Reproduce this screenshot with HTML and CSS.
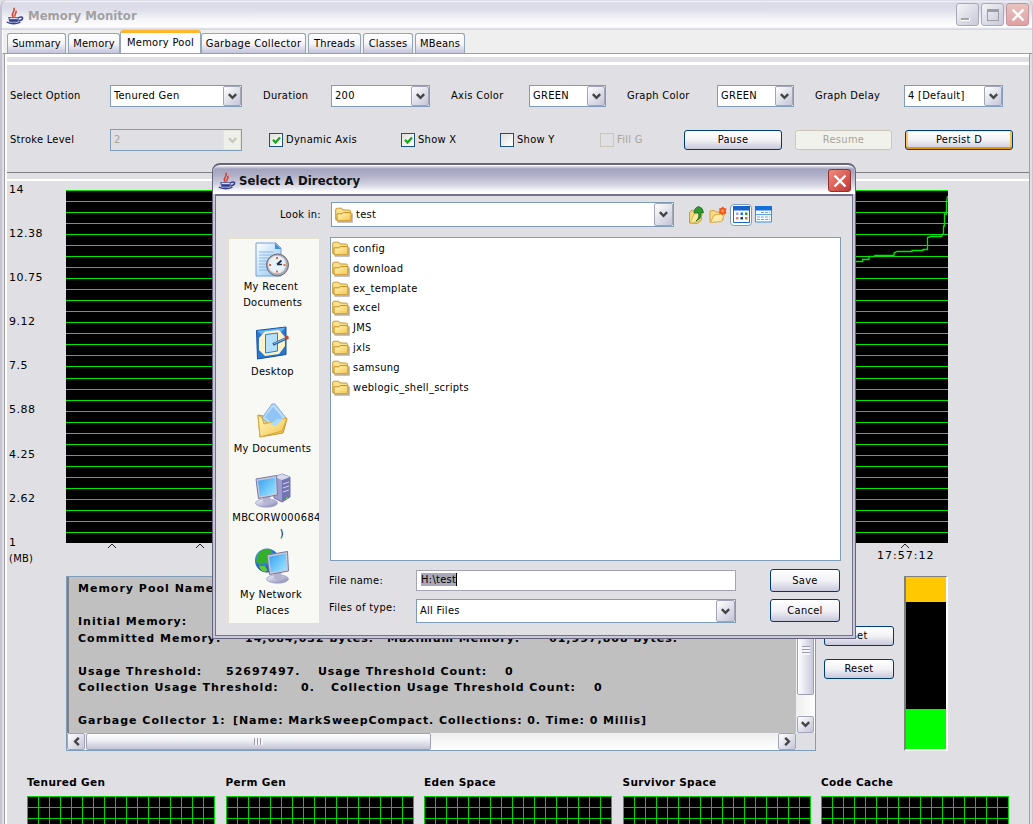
FILE: index.html
```
<!DOCTYPE html>
<html lang="en">
<head>
<meta charset="utf-8">
<title>Memory Monitor</title>
<link rel="stylesheet" href="styles.css">
</head>
<body>
<svg class="defs" aria-hidden="true">
  <defs>
    <linearGradient id="gFold" x1="0" y1="0" x2="1" y2="1"><stop offset="0" stop-color="#fff8b8"/><stop offset="1" stop-color="#f4c450"/></linearGradient>
    <linearGradient id="gScr" x1="0" y1="0" x2="1" y2="1"><stop offset="0" stop-color="#38a0f0"/><stop offset="1" stop-color="#a0e8ff"/></linearGradient>
    <linearGradient id="gPage" x1="0" y1="0" x2="1" y2="1"><stop offset="0" stop-color="#fff"/><stop offset="1" stop-color="#8cc4f4"/></linearGradient>
    <linearGradient id="gMetal" x1="0" y1="0" x2="1" y2="1"><stop offset="0" stop-color="#f4f4fc"/><stop offset="1" stop-color="#8484b4"/></linearGradient>
    <radialGradient id="gGlobe" cx=".35" cy=".3" r=".8"><stop offset="0" stop-color="#58b8ff"/><stop offset="1" stop-color="#0838a0"/></radialGradient>
  </defs>
  <symbol id="java" viewBox="0 0 17 17">
    <path d="M7 9.4C3.5 6.5 9 5 7.600 .8M8.600 9.200C7 7 11 5.400 9.200 3.600" fill="none" stroke="#d8402c" stroke-width="1.500"/>
    <path d="M2 9.500h10.500l-1 4.500q-4.500 1.600-8.500 0z" fill="#5560a8"/>
    <path d="M3.500 10.800h7.500" stroke="#dfe2f4"/>
    <path d="M12 9.800q4.500-1 3.500 1.400-.6 1.500-3.700 1.800M.8 14.300q6.500 3 12.800 0" fill="none" stroke="#34408c" stroke-width="1.400"/>
    <path d="M3.500 12.700h7.500" stroke="#28347c" stroke-width=".8"/>
  </symbol>
  <symbol id="folder" viewBox="0 0 18 16">
    <path d="M2.500 15h14.500V6.500" fill="none" stroke="#8c8c8c" stroke-width="1.500" opacity=".7"/>
    <path d="M.7 12.500V3q0-1.800 1.600-1.800h4q1 0 1.500 1.700l6.500.2q1.200 0 1.200 1.300v8z" fill="#f8e08c" stroke="#c89830"/>
    <path d="M2 13.800V6.800h4.900l1.400-1.200h7.700v7.400q0 .8-.8.800z" fill="url(#gFold)" stroke="#c48c20"/>
  </symbol>
  <symbol id="chev" viewBox="0 0 9 7"><path d="M.8 1.200l3.700 3.700 3.700-3.700" fill="none" stroke="currentColor" stroke-width="2.400"/></symbol>
  <symbol id="tick" viewBox="0 0 9 9"><path d="M1 3.800l2.500 2.700L8 1.500" fill="none" stroke="#21a121" stroke-width="2.200"/></symbol>
  <symbol id="monitor" viewBox="0 0 24 33">
    <ellipse cx="11.500" cy="28.500" rx="11" ry="4.200" fill="url(#gMetal)" stroke="#9898b8" stroke-width=".7"/>
    <path d="M8 22l7-1 1 7q-4 2-8 0z" fill="#b4b4d0"/>
    <path d="M1 4.500L21.500 1l1 19.500L3.500 24z" fill="#c8c8dc" stroke="#7878a0"/>
    <path d="M3 6.300L19.800 3.200l.8 15.700L5 21.700z" fill="url(#gScr)"/>
  </symbol>
</svg>

<div class="window">
  <header class="titlebar">
    <svg class="ico-java"><use href="#java"/></svg>
    <span class="title">Memory Monitor</span>
    <div class="caption">
      <span class="cap"><i class="glyph-min"></i></span>
      <span class="cap"><i class="glyph-max"></i></span>
      <span class="cap cap-close faded"><svg viewBox="0 0 14 14"><path d="M1.500 1.500l11 11M12.500 1.500l-11 11"/></svg></span>
    </div>
  </header>

  <nav class="tabs">
    <span class="tab t1">Summary</span><span class="tab t2">Memory</span><span class="tab active">Memory Pool</span><span class="tab t4">Garbage Collector</span><span class="tab t5">Threads</span><span class="tab t6">Classes</span><span class="tab t7">MBeans</span>
  </nav>

  <main class="page">
    <section class="controls">
      <div class="row row-a">
        <label>Select Option</label>
        <div class="combo w132"><span>Tenured Gen</span><b><svg><use href="#chev"/></svg></b></div>
        <label>Duration</label>
        <div class="combo w99"><span>200</span><b><svg><use href="#chev"/></svg></b></div>
        <label>Axis Color</label>
        <div class="combo w77"><span>GREEN</span><b><svg><use href="#chev"/></svg></b></div>
        <label>Graph Color</label>
        <div class="combo w77"><span>GREEN</span><b><svg><use href="#chev"/></svg></b></div>
        <label>Graph Delay</label>
        <div class="combo w99"><span>4 [Default]</span><b><svg><use href="#chev"/></svg></b></div>
      </div>
      <div class="row row-b">
        <label>Stroke Level</label>
        <div class="combo w132 off"><span>2</span><b><svg><use href="#chev"/></svg></b></div>
        <div class="check"><i><svg><use href="#tick"/></svg></i>Dynamic Axis</div>
        <div class="check"><i><svg><use href="#tick"/></svg></i>Show X</div>
        <div class="check"><i></i>Show Y</div>
        <div class="check off"><i></i>Fill G</div>
        <div class="btn pause">Pause</div>
        <div class="btn resume">Resume</div>
        <div class="btn persist">Persist D</div>
      </div>
    </section>

    <section class="graph">
      <div class="scale"><span>14</span><span>12.38</span><span>10.75</span><span>9.12</span><span>7.5</span><span>5.88</span><span>4.25</span><span>2.62</span><span class="last">1<em>(MB)</em></span></div>
      <div class="plot-col">
        <div class="plot">
          <svg viewBox="0 0 882 353"><path d="M780 71.500H796.500V69.500H803V66.500H808L809 65.500H828V63L831 61.500H846V60.500H857V59.500H861.500V47.500L865 46.500H875.500L877.500 43V36H878.500V24H880.500V12L881.500 6" fill="none" stroke="#00e600" stroke-width="1.300"/></svg>
        </div>
        <div class="ticks">
          <svg viewBox="0 0 882 6"><path d="M42 5l4-4 4 4M130 5l4-4 4 4M835 5l4-4 4 4" fill="none" stroke="#222"/></svg>
          <span>17:57:12</span>
        </div>
      </div>
    </section>

    <section class="detail">
      <div class="pane">
        <div class="text">
          <p>Memory Pool Name:</p>
          <p>&nbsp;</p>
          <p>Initial Memory:</p>
          <p><span class="c167">Committed Memory:</span><span class="c142">14,684,032 bytes.</span><span class="c162">Maximum Memory:</span><span>61,997,808 bytes.</span></p>
          <p>&nbsp;</p>
          <p><span class="c148">Usage Threshold:</span><span class="c92">52697497.</span><span class="c187">Usage Threshold Count:</span><span>0</span></p>
          <p><span class="c223">Collection Usage Threshold:</span><span class="c30">0.</span><span class="c263">Collection Usage Threshold Count:</span><span>0</span></p>
          <p>&nbsp;</p>
          <p><span class="c155">Garbage Collector 1:</span><span class="gc">[Name: MarkSweepCompact. Collections: 0. Time: 0 Millis]</span></p>
        </div>
        <div class="vbar"><div class="vthumb"><i></i></div><b class="sbtn"><svg><use href="#chev"/></svg></b></div>
        <div class="hbar"><b class="sbtn left"><svg><use href="#chev"/></svg></b><div class="hthumb"><i></i></div><b class="sbtn right"><svg><use href="#chev"/></svg></b></div>
      </div>
      <div class="set-col"><div class="btn">Set</div><div class="btn">Reset</div></div>
      <div class="gauge"><i class="g-top"></i><i class="g-mid"></i><i class="g-low"></i></div>
    </section>

    <section class="pools">
      <figure><figcaption>Tenured Gen</figcaption><div class="grid"></div></figure>
      <figure><figcaption>Perm Gen</figcaption><div class="grid"></div></figure>
      <figure><figcaption>Eden Space</figcaption><div class="grid"></div></figure>
      <figure><figcaption>Survivor Space</figcaption><div class="grid"></div></figure>
      <figure><figcaption>Code Cache</figcaption><div class="grid"></div></figure>
    </section>
  </main>
</div>

<div class="dialog">
  <header class="dlg-title">
    <svg class="ico-java"><use href="#java"/></svg>
    <span class="title">Select A Directory</span>
    <span class="cap cap-close"><svg viewBox="0 0 14 14"><path d="M1.500 1.500l11 11M12.500 1.500l-11 11"/></svg></span>
  </header>
  <div class="dlg-body">
    <div class="look">
      <label>Look in:</label>
      <div class="combo"><svg class="ico-folder"><use href="#folder"/></svg><span>test</span><b><svg><use href="#chev"/></svg></b></div>
      <div class="tools">
        <svg width="17" height="20" viewBox="0 0 17 20"><path d="M1.500 18V7l3-2 2 1.500h4l3 1V15l-4 3.500z" fill="#f3d878" stroke="#c8a040"/><path d="M2 18.500l4-9.500 9-1-3.500 8z" fill="#fae9a0" stroke="#d0a848" stroke-width=".8"/><path d="M8 16q4-3 2.500-8.500l-4.500.5Q6 3 10.500 1.500q4.500 1 5 6l-2.500.2q1 5.500-5 8.300z" fill="#2c9a30" stroke="#146818" stroke-width=".8"/></svg>
        <svg width="18" height="20" viewBox="0 0 18 20"><path d="M1 17V6l4-.7L7 7h7v8z" fill="#f6dc84" stroke="#d0a040"/><path d="M1.500 17.500L5 10l11-1.500-3.500 8z" fill="#fbeaa8" stroke="#d8ac4c"/><path d="M13.800 1.500l1.300 1.600 2.400.4-.7 2.500.5 2.500-2.500.5-1.200 1.500-1.600-1.500-2.200-.7.700-2.300-.5-2.500 2.300-.5z" fill="#f4541c"/><circle cx="13.700" cy="6" r="1.600" fill="#ffa050"/></svg>
        <span class="picked"><svg width="17" height="17" viewBox="0 0 17 17"><path d="M.5.5h16v16H.5z" fill="#fff" stroke="#1868c8"/><path d="M0 0h17v4.500H0z" fill="#1464cc"/><path d="M3 6.500h2.500V9H3z" fill="#a8a0d0"/><path d="M7.500 6.500H10V9H7.500z" fill="#1c78d8"/><path d="M12 6.500h2.500V9H12z" fill="#20a030"/><path d="M3 11h2.500v2.500H3z" fill="#f08068"/><path d="M7.500 11H10v2.500H7.500z" fill="#103c80"/><path d="M12 11h2.500v2.500H12z" fill="#b08030"/></svg></span>
        <svg width="17" height="17" viewBox="0 0 17 17"><path d="M.5.500h16v15.500H.5z" fill="#f4fbff" stroke="#4090dc"/><path d="M0 0h17v4.500H0z" fill="#1470d8"/><path d="M1 8.500h15" stroke="#58a4e8"/><path d="M2 11h13M2 13.500h13M6 6.500h9" stroke="#98a4b4" stroke-dasharray="3 1"/></svg>
      </div>
    </div>
    <div class="mid">
      <aside class="places">
        <div class="place p1">
          <svg width="34" height="36" viewBox="0 0 34 36"><path d="M1 1h20l5 5v28H1z" fill="url(#gPage)" stroke="#74a0d8"/><path d="M20 1v6h6z" fill="#3c90e0"/><path d="M4 10h15M4 13h13M4 16h12M4 19h10M4 22h9M4 25h9M4 28h10" stroke="#88b4e8"/><circle cx="22.500" cy="23" r="11" fill="#a8aab4" stroke="#686c78"/><circle cx="22" cy="22.500" r="8.300" fill="#e6f4ff" stroke="#e8e8f0" stroke-width="1.500"/><path d="M22 22.500l4.500-4M22 22.500h5" stroke="#222c3c" stroke-width="1.700"/><path d="M21 15h2v2h-2zM21 28.500h2v2h-2zM14 22h2v2h-2zM28.500 22h2v2h-2z" fill="#f06830"/></svg>
          <span>My Recent<br>&nbsp;Documents</span>
        </div>
        <div class="place p2">
          <svg width="34" height="34" viewBox="0 0 34 34"><path d="M1.500 4.500L31 1v27.500L2.500 33z" fill="#2878d0" stroke="#1450a0"/><path d="M2 5l28.500-3.500L17 16z" fill="#60b0f4"/><path d="M10 5.500l14-1.500 6 7v9l-6 8-14 2-6-6V12z" fill="#fdf2c8"/><path d="M10.500 8.500l12-1.500v18l-12 2z" fill="#b4e0fc" stroke="#2c80d4"/><path d="M18 18.500l14-6.500" stroke="#30609c" stroke-width="3"/><path d="M19 17.700l11-5.100" stroke="#84c4ec"/><path d="M30 10.500l3-1 1 3-3 1.500z" fill="#d04428"/></svg>
          <span>Desktop</span>
        </div>
        <div class="place p3">
          <svg width="32" height="36" viewBox="0 0 32 36"><path d="M2 12l5 1h19l5 3-4 14L4 34z" fill="#f5c850" stroke="#c89428"/><path d="M16 1h3l11 14-11 11L6 15z" fill="#b8dcfa" stroke="#78acdc"/><path d="M9 14l8-10 9 10-7 9z" fill="#90c4f4"/><path d="M2 12l4 3 2 6 8-2 15-4-5 13L4 34z" fill="url(#gFold)" stroke="#d8a840"/><path d="M14 21l7-5 6 0-7 7z" fill="#a8dcf8"/></svg>
          <span>My Documents</span>
        </div>
        <div class="place p4">
          <svg width="36" height="35" viewBox="0 0 36 35"><path d="M19 4l8-3 8 3v20l-8 5-8-4z" fill="#9c9ccc" stroke="#7474a8"/><path d="M27 7l8-3v20l-8 5z" fill="#7474b0"/><path d="M19 4l8-3 8 3-8 3z" fill="#d8d8ec"/><path d="M28 11l6-2M28 15l6-2M28 19l6-2" stroke="#d0d0ec"/><path d="M31 24h2v2h-2z" fill="#50d030"/><use href="#monitor" width="24" height="34" x="0" y="1"/></svg>
          <span>MBCORW000684<br>&nbsp; &nbsp;)</span>
        </div>
        <div class="place p5">
          <svg width="36" height="37" viewBox="0 0 36 37"><circle cx="13" cy="12.500" r="12" fill="url(#gGlobe)"/><path d="M5 4q6-4 11-3l2 4-5 3 3 4-2 4-4-2-4 3-4-4z" fill="#34b028"/><path d="M5 18l6 0 3 5-4 1q-4-2-5-6z" fill="#60c83c"/><use href="#monitor" width="24" height="34" x="12" y="2"/></svg>
          <span>My Network<br>&nbsp;Places</span>
        </div>
      </aside>
      <ul class="files">
        <li><svg class="ico-folder"><use href="#folder"/></svg>config</li>
        <li><svg class="ico-folder"><use href="#folder"/></svg>download</li>
        <li><svg class="ico-folder"><use href="#folder"/></svg>ex_template</li>
        <li><svg class="ico-folder"><use href="#folder"/></svg>excel</li>
        <li><svg class="ico-folder"><use href="#folder"/></svg>JMS</li>
        <li><svg class="ico-folder"><use href="#folder"/></svg>jxls</li>
        <li><svg class="ico-folder"><use href="#folder"/></svg>samsung</li>
        <li><svg class="ico-folder"><use href="#folder"/></svg>weblogic_shell_scripts</li>
      </ul>
      <div class="form">
        <label>File name:</label>
        <div class="input"><mark>H:\test</mark></div>
        <div class="btn">Save</div>
        <label class="up">Files of type:</label>
        <div class="combo"><span>All Files</span><b><svg><use href="#chev"/></svg></b></div>
        <div class="btn">Cancel</div>
      </div>
    </div>
  </div>
</div>
</body>
</html>
```

FILE: styles.css
```
* { box-sizing: border-box; }
body { margin: 0; width: 1033px; height: 824px; overflow: hidden; position: relative; background: #e0dfe3; font: 11px/14px "DejaVu Sans Condensed", "DejaVu Sans", sans-serif; letter-spacing: .3px; color: #000; white-space: nowrap; }
.defs { position: absolute; width: 0; height: 0; }
svg { display: block; flex: none; }
p, ul, figure { margin: 0; padding: 0; }

.window { height: 824px; display: flex; flex-direction: column; border-left: 2px solid #c4c3d2; border-right: 1px solid #c8c8d4; border-radius: 7px 7px 0 0; }
.titlebar { height: 30px; flex: none; display: flex; align-items: center; padding: 2px 3px 0 4px; background: linear-gradient(#c8c8d8 0, #f4f4f8 1px, #dadae6 3px, #dedeea 10px, #f4f4f8 19px, #fff 27px, #d6d6e4 29px); border-radius: 7px 7px 0 0; }
.ico-java { width: 18px; height: 18px; }
.title { font: bold 13px/18px "DejaVu Sans Condensed", "DejaVu Sans", sans-serif; margin-left: 4px; letter-spacing: .1px; }
.titlebar .title { color: #a2a1a1; letter-spacing: 0; }
.titlebar .ico-java { margin-top: -1px; }
.caption { margin-left: auto; display: flex; gap: 2px; margin-top: -3px; }
.cap { width: 23px; height: 23px; border: 1px solid #a8a8b8; border-radius: 3px; background: linear-gradient(135deg, #f4f4f8, #c8c8d8); display: flex; align-items: center; justify-content: center; }
.glyph-min { width: 9px; height: 3px; background: #a2a2a8; border: 1px solid #fff; border-width: 0 1px 1px 0; margin: 10px 5px 0 0; }
.glyph-max { width: 12px; height: 12px; border: 1px solid #9c9ca4; border-top-width: 3px; }
.cap-close { background: linear-gradient(135deg, #f08c80, #d85850 60%, #b83c3c); border-color: #903030; }
.cap-close svg { width: 14px; height: 14px; stroke: #fff; stroke-width: 2.4; }
.cap-close.faded { background: linear-gradient(#e8c4c0, #e0a0a4); border-color: #c49498; }

.tabs { height: 24px; flex: none; display: flex; align-items: flex-end; padding-left: 5px; background: #efeff0; border-left: 1px solid #fff; border-bottom: 1px solid #8a9396; }
.tab { height: 20px; line-height: 20px; text-align: center; border: 1px solid #91a7b4; border-bottom: 0; border-radius: 3px 3px 0 0; background: linear-gradient(#fff, #f4f4f8 50%, #c4c4dc); margin-right: 2px; letter-spacing: .2px; }
.t1 { width: 59px; margin-left: -1px; letter-spacing: .1px; }
.t2 { width: 52px; margin-right: 0; }
.tab.active { width: 81px; height: 24px; margin-bottom: -1px; margin-right: 0; background: #fcfcfe; border-top: 3px solid #ffb62c; line-height: 19px; letter-spacing: .3px; }
.t4 { width: 105px; letter-spacing: .35px; }
.t5 { width: 53px; }
.t6 { width: 50px; }
.t7 { width: 50px; }

.page { flex: 1; margin-left: 3px; margin-right: 3px; border-left: 2px solid #fff; outline: 1px solid #a0a0a4; display: flex; flex-direction: column; background: #e0dfe3; min-height: 0; }
.controls { height: 127px; flex: none; background: linear-gradient(#fff 3px, #e0dfe3 3px 8px, #fff 8px 11px, #e0dfe3 11px 118px, #808080 118px 119px, #e0dfe3 119px 125px, #fff 125px 127px); padding: 30px 0 0 3px; }
.row { display: grid; align-items: center; height: 24px; }
.row-a { grid-template-columns: 100px 153px 68px 120px 78px 98px 90px 98px 89px 1fr; }
.row-b { grid-template-columns: 100px 159px 132px 99px 100px 84px 111px 110px 1fr; margin-top: 20px; }
.combo { display: flex; align-items: center; height: 22px; background: #fff; border: 1px solid #7f9db9; padding-left: 3px; }
.combo b { margin-left: auto; width: 18px; height: 20px; border: 1px solid #a4a4b8; border-radius: 2px; background: linear-gradient(135deg, #fff, #c4c4d8); display: flex; align-items: center; justify-content: center; color: #444; }
.combo b svg, .sbtn svg { width: 9px; height: 7px; }
.combo.off { background: transparent; color: #a6a698; }
.combo.off b { background: #f0f0ea; border-color: #e4e4dc; color: #c8c8bc; }
.w132 { width: 132px; }
.w99 { width: 99px; }
.w77 { width: 77px; }
.check { display: flex; align-items: center; gap: 3px; }
.check i { width: 14px; height: 14px; border: 1px solid #1c5180; background: linear-gradient(135deg, #e0e0dc, #fff); display: flex; align-items: center; justify-content: center; }
.check i svg { width: 9px; height: 9px; }
.check.off { color: #a6a698; }
.check.off i { background: transparent; border-color: #cac8bb; }
.btn { height: 20px; border: 1px solid #003c74; border-radius: 3px; background: linear-gradient(#fff, #f2f2f6 50%, #c8c8dc); display: flex; align-items: center; justify-content: center; }
.pause { width: 98px; }
.resume { width: 97px; background: #f2f2ec; border-color: #c9c7ba; color: #a6a698; }
.persist { width: 108px; box-shadow: inset 0 -2px #e59700, inset 0 1px #fde8b0, inset 2px 0 #f8c860, inset -2px 0 #f8c050; }

.graph { height: 395px; flex: none; display: flex; padding: 9px 0 0 2px; }
.scale { width: 57px; font: 11px/14px "DejaVu Sans", sans-serif; display: flex; flex-direction: column; margin-top: -7px; letter-spacing: .5px; }
.scale span { height: 44.1px; }
.scale .last { height: 30px; }
.scale em { display: block; font: 11px/17px "DejaVu Sans Condensed", sans-serif; letter-spacing: .3px; }
.plot-col { width: 882px; }
.plot { height: 353px; background: repeating-linear-gradient(#00e800 0 1px, #000 1px 11.03px); }
.plot svg { width: 882px; height: 353px; }
.ticks svg { width: 882px; height: 6px; }
.ticks span { display: block; margin-left: 811px; font: 11px/13px "DejaVu Sans", sans-serif; letter-spacing: 1px; }

.detail { height: 175px; flex: none; display: flex; padding-left: 59px; }
.pane { width: 750px; height: 175px; border: 1px solid #7f9db9; display: grid; grid-template: 156px 17px / 729px 19px; }
.text { background: #c0c0c0; border-left: 2px solid #808080; padding: 4px 0 0 9px; font: bold 11px/16.5px "DejaVu Sans", sans-serif; letter-spacing: 1px; overflow: hidden; }
.text p { height: 16.5px; display: flex; }
.text span { flex: none; }
.text .gc { letter-spacing: .92px; }
.c167 { width: 167px; } .c142 { width: 142px; } .c162 { width: 162px; }
.c148 { width: 148px; } .c92 { width: 92px; } .c187 { width: 187px; }
.c223 { width: 223px; } .c30 { width: 30px; } .c263 { width: 263px; } .c155 { width: 155px; }
.text .c263, .text .c187 { letter-spacing: .93px; }
.vbar { background: linear-gradient(90deg, #eee, #fff); display: flex; flex-direction: column; padding-left: 1px; }
.vthumb { height: 118px; width: 17px; border: 1px solid #a0a0b4; border-radius: 0 0 2px 2px; background: linear-gradient(90deg, #fff, #c8c8dc); display: flex; align-items: flex-end; justify-content: center; padding-bottom: 39px; }
.vthumb i { width: 8px; height: 9px; background: repeating-linear-gradient(#9c9ca8 0 1px, #f4f4f8 1px 3px); }
.sbtn { width: 18px; height: 17px; flex: none; border: 1px solid #a4a4b8; border-radius: 2px; background: linear-gradient(135deg, #fff, #c4c4d8); display: flex; align-items: center; justify-content: center; color: #444; }
.vbar .sbtn { margin-top: auto; width: 17px; }
.hbar { background: linear-gradient(#eee, #fff); display: flex; }
.hthumb { width: 345px; border: 1px solid #a0a0b4; border-radius: 2px; background: linear-gradient(#fff, #f0f0f6 40%, #c4c4d8); display: flex; align-items: center; justify-content: center; margin-left: 1px; }
.hthumb i { width: 9px; height: 7px; background: repeating-linear-gradient(90deg, #9c9ca8 0 1px, #f4f4f8 1px 3px); }
.left svg { transform: rotate(90deg); }
.right svg { transform: rotate(-90deg); }
.right { margin-left: auto; }
.set-col { width: 70px; margin-left: 8px; padding-top: 50px; display: flex; flex-direction: column; gap: 13px; }
.gauge { width: 44px; margin-left: 10px; border: 2px solid #fff; border-top: 1px solid #808080; border-left: 2px solid #808080; display: flex; flex-direction: column; }
.g-top { height: 25px; background: #ffc800; }
.g-mid { flex: 1; background: #000; }
.g-low { height: 40px; background: #0f0; }

.pools { display: flex; gap: 10.5px; padding: 24px 0 0 20px; }
.pools figcaption { font: bold 10.5px/14px "DejaVu Sans", sans-serif; letter-spacing: .35px; height: 21px; }
.grid { width: 188px; height: 60px; background: repeating-linear-gradient(#00d400 0 1px, transparent 1px 11px), repeating-linear-gradient(90deg, #00d400 0 1px, #000 1px 11px); }

.dialog { position: absolute; left: 212px; top: 163px; width: 644px; height: 476px; border: 1px solid #66647f; border-top-width: 2px; border-radius: 8px 8px 0 0; background: #c8c8d8; display: flex; flex-direction: column; padding: 1px 2px 2px; box-shadow: inset 0 1px #fff; }
.dlg-title { height: 28px; flex: none; display: flex; align-items: center; padding: 2px 4px 0 5px; margin: 0 -2px; border-radius: 6px 6px 0 0; background: linear-gradient(#e4e4ee 0, #a4a3bf 3px, #b0afc8 9px, #d0d0de 18px, #fff 26px); }
.dlg-title .cap { margin-left: auto; margin-top: -1px; }
.dlg-title .title { color: #111; margin-left: 3px; }
.dlg-body { flex: 1; border: 1px solid #74728f; border-top-width: 2px; background: #e0dfe3; padding: 6px 11px 0 12px; }
.look { display: flex; height: 25px; align-items: center; }
.look label { width: 93px; text-align: right; margin-right: 10px; }
.look .combo { width: 343px; height: 25px; gap: 3px; }
.look .combo b, .form .combo b { width: 19px; height: 100%; }
.ico-folder { width: 18px; height: 16px; }
.tools { display: flex; align-items: center; margin-left: 14px; gap: 4px; height: 22px; }
.picked { width: 22px; height: 22px; border: 1px solid #7f9db9; border-radius: 4px; background: #fff; display: flex; align-items: center; justify-content: center; margin-left: -1px; margin-right: -1px; }
.mid { display: grid; grid-template: 324px 62px / 92px 511px; column-gap: 10px; margin-top: 10px; }
.places { grid-row: 1 / 3; margin-top: 1px; background: #f8f8f4; border: 1px solid #e4e2cc; display: flex; flex-direction: column; align-items: center; overflow: hidden; height: 386px; padding-right: 3px; }
.place { display: flex; flex-direction: column; align-items: center; line-height: 15.5px; text-align: center; flex: none; }
.place svg { margin-bottom: 1px; }
.p1 { height: 86px; padding-top: 3px; }
.p1 span, .p5 span { margin-left: -3px; }
.p2 { height: 78px; padding-top: 1px; }
.p2 svg { margin-bottom: 4px; }
.p3 { height: 70px; }
.p3 svg { margin-bottom: 2px; }
.p4 { height: 75px; }
.p4 span { margin: 1px 0 0 8px; letter-spacing: .4px; }
.p5 svg { margin-bottom: 2px; }
.files { list-style: none; background: #fff; border: 1px solid #7f9db9; padding: 1px; }
.files li { height: 19.85px; display: flex; align-items: center; gap: 3px; }
.form { grid-column: 2; display: grid; grid-template-columns: 86px 320px 70px; column-gap: 0; grid-template-rows: 23px 25px; row-gap: 6px; margin-top: 8px; align-items: center; }
.form .btn { margin-left: 34px; width: 70px; height: 23px; }
.form label { margin-left: -1px; }
.form .up { margin-top: -5px; }
.form .input { height: 21px; background: #fff; border: 1px solid #a4a4b4; padding: 2px 4px; }
.form mark { background: #a8a8b8; color: #000; border-right: 1px solid #000; }
.form .combo { height: 24px; margin-top: 1px; }
```
